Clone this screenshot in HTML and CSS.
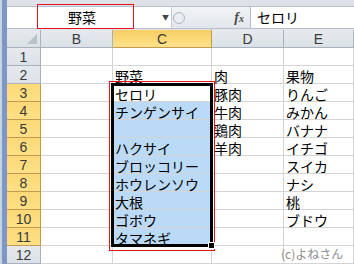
FILE: index.html
```html
<!DOCTYPE html>
<html lang="ja">
<head>
    <meta charset="UTF-8">
    <title>Excel 選択範囲</title>
    <link rel="stylesheet" href="styles.css">
</head>
<body>
    <div class="window">
        <div class="frame-left"></div>
        <div class="main">
            <div class="ribbon-edge"></div>
            <div class="formula-bar">
                <div class="name-box">
                    <span class="name-text">野菜</span>
                    <span class="drop">▼</span>
                </div>
                <div class="fx-area">
                    <span class="knob"></span>
                    <span class="fx"><i>f</i><i class="x">x</i></span>
                </div>
                <div class="formula-input">セロリ</div>
            </div>
            <div class="bar-gap"></div>

            <div class="sheet">
                <div class="hd corner"><span class="tri"></span></div>
                <div class="hd">B</div>
                <div class="hd sel">C</div>
                <div class="hd">D</div>
                <div class="hd">E</div>

                <div class="hd rh">1</div>
                <div class="c"></div><div class="c"></div><div class="c"></div><div class="c"></div>

                <div class="hd rh">2</div>
                <div class="c"></div><div class="c">野菜</div><div class="c">肉</div><div class="c">果物</div>

                <div class="hd rh sel">3</div>
                <div class="c"></div><div class="c">セロリ</div><div class="c">豚肉</div><div class="c">りんご</div>

                <div class="hd rh sel">4</div>
                <div class="c"></div><div class="c blue">チンゲンサイ</div><div class="c">牛肉</div><div class="c">みかん</div>

                <div class="hd rh sel">5</div>
                <div class="c"></div><div class="c blue"></div><div class="c">鶏肉</div><div class="c">バナナ</div>

                <div class="hd rh sel">6</div>
                <div class="c"></div><div class="c blue">ハクサイ</div><div class="c">羊肉</div><div class="c">イチゴ</div>

                <div class="hd rh sel">7</div>
                <div class="c"></div><div class="c blue">ブロッコリー</div><div class="c"></div><div class="c">スイカ</div>

                <div class="hd rh sel">8</div>
                <div class="c"></div><div class="c blue">ホウレンソウ</div><div class="c"></div><div class="c">ナシ</div>

                <div class="hd rh sel">9</div>
                <div class="c"></div><div class="c blue">大根</div><div class="c"></div><div class="c">桃</div>

                <div class="hd rh sel">10</div>
                <div class="c"></div><div class="c blue">ゴボウ</div><div class="c"></div><div class="c">ブドウ</div>

                <div class="hd rh sel">11</div>
                <div class="c"></div><div class="c blue">タマネギ</div><div class="c"></div><div class="c"></div>

                <div class="hd rh">12</div>
                <div class="c"></div><div class="c"></div><div class="c"></div><div class="c"></div>

                <!-- 選択範囲の枠 -->
                <div class="range-red"></div>
                <div class="range-box"></div>
                <div class="fill-handle"></div>
                <div class="credit">(c)よねさん</div>
            </div>
        </div>
        <div class="name-mark"></div>
    </div>
</body>
</html>
```

FILE: styles.css
```css
body {
    margin: 0;
    background: #ffffff;
    font-family: "Noto Sans CJK JP", "Noto Sans", sans-serif;
}
.window {
    position: relative;
    display: flex;
    width: 354px;
    height: 264px;
    overflow: hidden;
}
.frame-left {
    width: 5px;
    border-left: 2px solid #c9d4e3;
    background: #7d98c6;
    flex-shrink: 0;
}
.main {
    flex: 1;
    display: flex;
    flex-direction: column;
    min-width: 0;
}
.ribbon-edge {
    height: 7px;
    background: #dde2e9;
    border-bottom: 1px solid #b6bfcb;
}
.formula-bar {
    display: flex;
    height: 21px;
    background: #e3e8ee;
}
.name-box {
    width: 164px;
    background: #ffffff;
    display: flex;
    align-items: center;
    position: relative;
}
.name-text {
    margin-left: 61px;
    font-size: 14px;
    line-height: 21px;
    color: #000;
}
.drop {
    position: absolute;
    right: 2px;
    top: 5px;
    font-size: 7px;
    color: #444;
}
.fx-area {
    width: 78px;
    display: flex;
    align-items: center;
    position: relative;
    border-left: 1px solid #c5ccd6;
    background: linear-gradient(#f1f3f6, #e2e6ec);
}
.knob {
    width: 10px;
    height: 10px;
    margin-left: 1px;
    border-radius: 50%;
    border: 1px solid #aeb6c2;
    background: #e9ecf0;
}
.fx {
    margin-left: auto;
    margin-right: 6px;
    font-family: "Liberation Serif", serif;
    font-weight: bold;
    font-size: 14px;
    color: #4a4a4a;
}
.fx .x {
    font-size: 10px;
}
.formula-input {
    flex: 1;
    background: #ffffff;
    border-left: 1px solid #b4bcc8;
    padding-left: 6px;
    font-size: 14px;
    line-height: 21px;
}
.bar-gap {
    height: 1px;
    background: #e1e5eb;
    border-top: 1px solid #b6bfcb;
}
.sheet {
    position: relative;
    display: grid;
    grid-template-columns: 34px 72px 99px 72px 70px;
    grid-auto-rows: 18px;
}
.hd {
    box-sizing: border-box;
    background: linear-gradient(#e6eaee, #dbe1e6);
    border-right: 1px solid #a9b2bb;
    border-bottom: 1px solid #a9b2bb;
    font-family: "Liberation Sans", sans-serif;
    font-size: 14px;
    color: #3a3a3a;
    text-align: center;
    line-height: 18px;
}
.hd.sel {
    background: linear-gradient(#f7cd62, #ffe38b);
    border-color: #c39a4e;
}
.hd.rh.sel {
    background: linear-gradient(#fcd979, #ffe084);
}
.corner {
    position: relative;
}
.tri {
    position: absolute;
    right: 3px;
    bottom: 3px;
    width: 0;
    height: 0;
    border-left: 10px solid transparent;
    border-bottom: 10px solid #b9c1c9;
}
.c {
    box-sizing: border-box;
    border-right: 1px solid #d4d4d4;
    border-bottom: 1px solid #d4d4d4;
    font-size: 14px;
    line-height: 20px;
    padding-left: 2px;
    white-space: nowrap;
    color: #000;
}
.c.blue {
    background: #bbdaf8;
}
.range-red {
    position: absolute;
    left: 102px;
    top: 51px;
    width: 106px;
    height: 170px;
    border: 1px solid #e4141b;
    box-sizing: border-box;
}
.range-box {
    position: absolute;
    left: 104px;
    top: 53px;
    width: 102px;
    height: 164px;
    border: 3px solid #000;
    box-sizing: border-box;
}
.fill-handle {
    position: absolute;
    left: 201px;
    top: 212px;
    width: 5px;
    height: 5px;
    background: #000;
    border: 1px solid #fff;
}
.credit {
    position: absolute;
    left: 274px;
    top: 215px;
    font-size: 12px;
    color: #8c8c8c;
}
.name-mark {
    position: absolute;
    left: 37px;
    top: 4px;
    width: 97px;
    height: 25px;
    border: 1px solid #e4141b;
    box-sizing: border-box;
}
```
